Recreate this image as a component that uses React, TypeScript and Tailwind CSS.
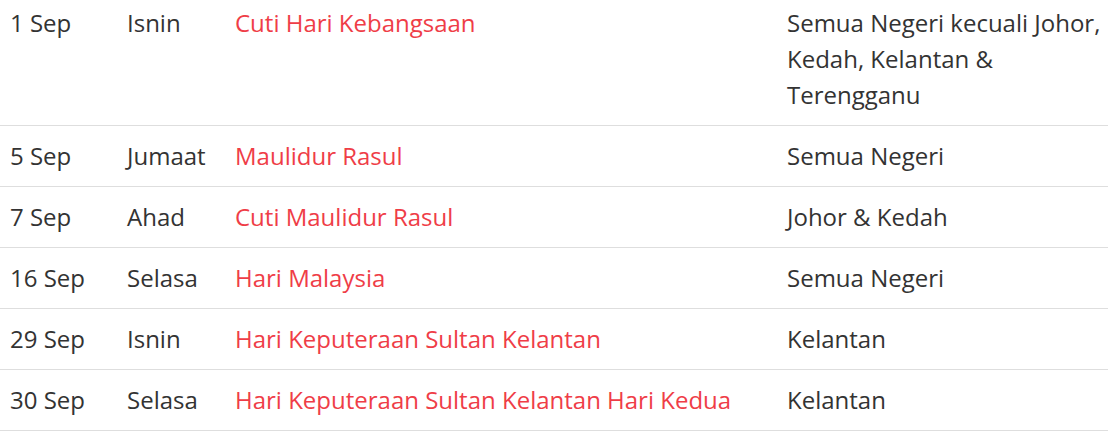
const rows = [
  {
    date: "1 Sep",
    day: "Isnin",
    name: "Cuti Hari Kebangsaan",
    states: "Semua Negeri kecuali Johor, Kedah, Kelantan & Terengganu",
  },
  { date: "5 Sep", day: "Jumaat", name: "Maulidur Rasul", states: "Semua Negeri" },
  { date: "7 Sep", day: "Ahad", name: "Cuti Maulidur Rasul", states: "Johor & Kedah" },
  { date: "16 Sep", day: "Selasa", name: "Hari Malaysia", states: "Semua Negeri" },
  { date: "29 Sep", day: "Isnin", name: "Hari Keputeraan Sultan Kelantan", states: "Kelantan" },
  {
    date: "30 Sep",
    day: "Selasa",
    name: "Hari Keputeraan Sultan Kelantan Hari Kedua",
    states: "Kelantan",
  },
];

export default function App() {
  return (
    <div className="w-[1108px] h-[442px] overflow-hidden bg-white font-['Open_Sans',sans-serif] text-[24px] leading-[36px] text-[#333]">
      <table className="w-[1116px] table-fixed border-collapse -mt-[7px]">
        <colgroup>
          <col className="w-[117px]" />
          <col className="w-[108px]" />
          <col className="w-[552px]" />
          <col className="w-[339px]" />
        </colgroup>
        <tbody>
          {rows.map((r) => (
            <tr key={r.date} className="border-b border-[#dedede]">
              <td className="px-[10px] py-3 align-top">{r.date}</td>
              <td className="px-[10px] py-3 align-top">{r.day}</td>
              <td className="px-[10px] py-3 align-top text-[#ef3d47]">{r.name}</td>
              <td className="px-[10px] py-3 align-top">{r.states}</td>
            </tr>
          ))}
        </tbody>
      </table>
    </div>
  );
}
